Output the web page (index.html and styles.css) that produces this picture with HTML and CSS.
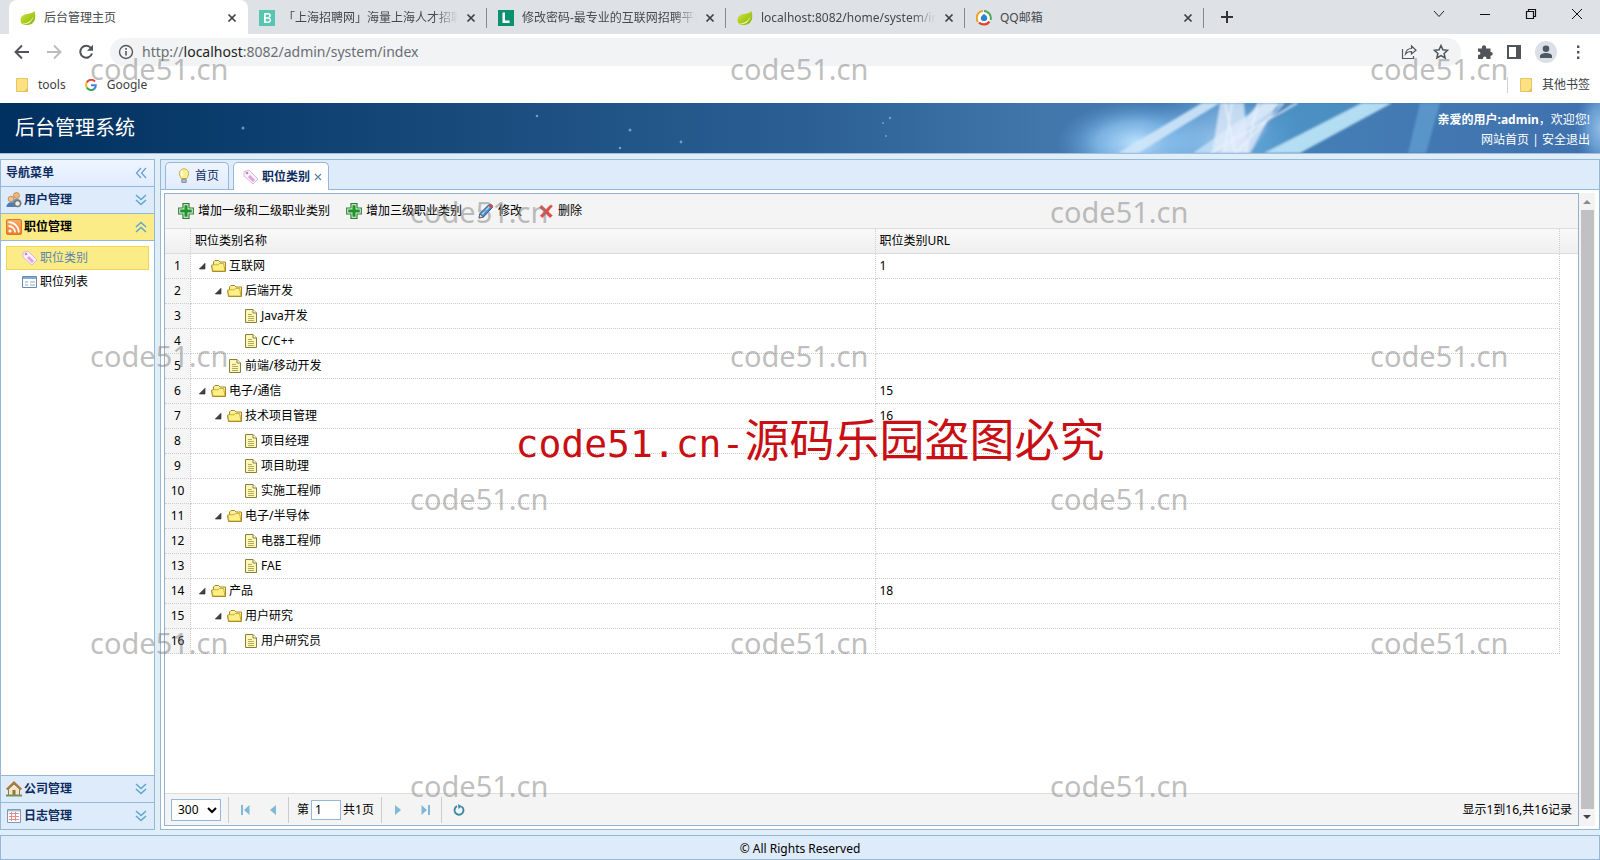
FILE: index.html
```html
<!DOCTYPE html>
<html lang="zh-CN">
<head>
<meta charset="utf-8">
<title>后台管理主页</title>
<link rel="stylesheet" href="styles.css">
</head>
<body>
<svg class="defs" aria-hidden="true">
  <defs>
    <linearGradient id="gFolder" x1="0" y1="0" x2="0" y2="1"><stop offset="0" stop-color="#fff9a8"/><stop offset="1" stop-color="#f3cf45"/></linearGradient>
    <linearGradient id="gLeaf" x1="0" y1="0" x2="1" y2="1"><stop offset="0" stop-color="#dbe43a"/><stop offset="1" stop-color="#7cb50e"/></linearGradient>
    <linearGradient id="gRss" x1="0" y1="0" x2="0" y2="1"><stop offset="0" stop-color="#f9ab6c"/><stop offset="1" stop-color="#ee7a24"/></linearGradient>
    <symbol id="i-leaf" viewBox="0 0 16 16"><path d="M14.6 1c1.6 6 .9 13-6.600 14C5.300 15.300 3 14.800 1.600 13.600.2 11.500-.2 8 2.400 5.800 5.800 3 12 4.500 14.600 1z" fill="url(#gLeaf)"/><path d="M1.500 13.600c5 .2 9.500-2 12.100-7.600-1.600 6.500-6 9.400-12.100 7.600z" fill="#f3f7a0"/></symbol>
    <symbol id="i-x" viewBox="0 0 10 10"><path d="M1.500 1.500l7 7m0-7l-7 7" stroke="currentColor" stroke-width="1.700" fill="none"/></symbol>
    <symbol id="i-file" viewBox="0 0 12 14"><path d="M.5.500h11v13H.500z" fill="#fddf84" stroke="#e9c65c"/><path d="M8.500 13.500l3-4v4z" fill="#e5bf4d"/></symbol>
    <symbol id="i-down" viewBox="0 0 12 12"><path d="M1 1l5 4.500L11 1M1 6l5 4.500L11 6" fill="none" stroke="#5fa6cc" stroke-width="1.500"/></symbol>
    <symbol id="i-tag" viewBox="0 0 16 16"><path d="M1 2.500L6 1l9 9-5 5-9-8z" fill="#fbf0fa" stroke="#d8b9d6"/><path d="M7 6l5 5-2 2-5-5z" fill="#dfa0dc"/><circle cx="4" cy="4" r="1.300" fill="#b98cb5"/></symbol>
    <symbol id="i-folder" viewBox="0 0 16 14"><path d="M1.500 12.500L.500 6.500h2V3l1.500-1.500h3.500L9 3h5.500v9.500z" fill="url(#gFolder)" stroke="#a98722"/><path d="M2 12L.8 5.800H7l1.500-1.300h4L14 12z" fill="#fdf186" stroke="#b8962c" stroke-width=".7"/></symbol>
    <symbol id="i-doc" viewBox="0 0 12 14"><path d="M.5.500h7.500l3.500 3.500v9.500H.500z" fill="#fff8b4" stroke="#85803e"/><path d="M8 .5V4h3.500" fill="#fff" stroke="#85803e"/><path d="M3 5.500h4M3 7.500h6M3 9.500h6M3 11.500h6" stroke="#a8a260" stroke-width=".9"/></symbol>
    <symbol id="i-arrow" viewBox="0 0 8 8"><path d="M7 1.300V7H1.300z" fill="#444" stroke="#222" stroke-width=".6"/></symbol>
    <symbol id="i-plus" viewBox="0 0 16 16"><path d="M5 .700h6V5h4.300v6H11v4.300H5V11H.700V5H5z" fill="#fff" stroke="#2c7d32" stroke-width="1.200"/><path d="M6.700 2.500h2.600v4.200h4.200v2.600H9.300v4.200H6.700V9.300H2.500V6.700h4.200z" fill="#1c9a26" stroke="#0d8318" stroke-width=".5"/></symbol>
  </defs>
</svg>

<header class="browser">
  <div class="tabstrip">
    <div class="tab tab-active"><svg class="ico16"><use href="#i-leaf"/></svg><span class="tab-title">后台管理主页</span><button class="close" aria-label="关闭"><svg class="ico10"><use href="#i-x"/></svg></button></div>
    <div class="tab"><svg class="ico16" viewBox="0 0 16 16"><path d="M0 0h16v16H0z" fill="#55c6b0"/><path d="M5 3h4c4 0 3.500 4 1.200 4.800C13 8.500 13 13 9 13H5zM6.800 7.200H9c1.600 0 1.600-2.600 0-2.600H6.800zm0 4.200h2.400c1.900 0 1.900-2.700 0-2.700H6.800z" fill="#fff" fill-rule="evenodd"/></svg><span class="tab-title fade">「上海招聘网」海量上海人才招聘信息</span><button class="close" aria-label="关闭"><svg class="ico10"><use href="#i-x"/></svg></button></div>
    <div class="tab"><svg class="ico16" viewBox="0 0 16 16"><path d="M0 0h16v16H0z" fill="#0c9170"/><path d="M4.500 2.500h2.500v8h4.500V13h-7z" fill="#fff"/></svg><span class="tab-title fade">修改密码-最专业的互联网招聘平台</span><button class="close" aria-label="关闭"><svg class="ico10"><use href="#i-x"/></svg></button></div>
    <div class="tab"><svg class="ico16"><use href="#i-leaf"/></svg><span class="tab-title fade">localhost:8082/home/system/index</span><button class="close" aria-label="关闭"><svg class="ico10"><use href="#i-x"/></svg></button></div>
    <div class="tab"><svg class="ico16" viewBox="0 0 16 16"><circle cx="8" cy="8" r="7" fill="#fff"/><path d="M7 1a7 7 0 0 0-5 11" fill="none" stroke="#f0a01c" stroke-width="2"/><path d="M8 1a7 7 0 0 1 6.500 9" fill="none" stroke="#4ba84e" stroke-width="2"/><path d="M3 12.500a7 7 0 0 0 10.500-1" fill="none" stroke="#dc4434" stroke-width="2.400"/><path d="M8 4c2.500 1.500 4 3 3 5.500-1 2-5 2-6 0C4.200 7 6 5 8 4z" fill="#2f82cc"/></svg><span class="tab-title">QQ邮箱</span><button class="close" aria-label="关闭"><svg class="ico10"><use href="#i-x"/></svg></button></div>
    <button class="newtab" aria-label="新标签页"><svg class="ico12" viewBox="0 0 12 12"><path d="M6 0v12M0 6h12" stroke="#333" stroke-width="2"/></svg></button>
    <div class="winctl">
      <button aria-label="搜索标签页"><svg class="ico12" viewBox="0 0 12 12"><path d="M1 3l5 5.500L11 3" fill="none" stroke="#222"/></svg></button>
      <button aria-label="最小化"><svg class="ico12" viewBox="0 0 12 12"><path d="M1 6.500h10" stroke="#111"/></svg></button>
      <button aria-label="还原"><svg class="ico12" viewBox="0 0 12 12"><path d="M1.500 3.500h7v7h-7zM3.500 3.500v-2h7v7h-2" fill="none" stroke="#111" stroke-width="1.200"/></svg></button>
      <button aria-label="关闭窗口"><svg class="ico12" viewBox="0 0 12 12"><path d="M1 1l10 10M11 1L1 11" stroke="#111"/></svg></button>
    </div>
  </div>
  <div class="navbar">
    <button aria-label="后退"><svg class="ico16" viewBox="0 0 16 16"><path d="M15 8H2M8 1.500L1.500 8 8 14.500" fill="none" stroke="#505357" stroke-width="1.900"/></svg></button>
    <button aria-label="前进"><svg class="ico16" viewBox="0 0 16 16"><path d="M1 8h13M8 1.500L14.500 8 8 14.500" fill="none" stroke="#b9bbbe" stroke-width="1.900"/></svg></button>
    <button aria-label="刷新"><svg class="ico16" viewBox="0 0 16 16"><path d="M13 4A6 6 0 1 0 14 9.500" fill="none" stroke="#505357" stroke-width="2"/><path d="M15 .8v6H9z" fill="#505357"/></svg></button>
    <div class="omnibox">
      <svg class="ico16" viewBox="0 0 16 16"><circle cx="8" cy="8" r="6.500" fill="none" stroke="#55585c" stroke-width="1.400"/><path d="M8 7v4.500M8 4v1.700" stroke="#55585c" stroke-width="1.600"/></svg>
      <span class="url">http://<b>localhost</b>:8082/admin/system/index</span>
      <svg class="ico16" viewBox="0 0 16 16"><path d="M1.500 5v9.500h11V12M4.500 10c.5-4 3-5.500 6-5.500V2l4.500 4.300L10.500 10V7.500C8 7.500 6 8 4.500 10z" fill="none" stroke="#55585c" stroke-width="1.200"/></svg>
      <svg class="ico16" viewBox="0 0 16 16"><path d="M8 1.500l1.900 4.300 4.700.5-3.500 3.100 1 4.600L8 11.600 3.900 14l1-4.600L1.400 6.300l4.700-.5z" fill="none" stroke="#505357" stroke-width="1.500"/></svg>
    </div>
    <div class="exts">
      <svg class="ico16" viewBox="0 0 16 16"><path d="M1 4.500h4c-1-4.500 5-4.500 4 0h4.500V8c3-.3 3 4 0 3.800V15H9.500c.5-3.500-4-3.500-3.500 0H1v-4c3.200 0 3.200-3.500 0-3.500z" fill="#505357"/></svg>
      <svg class="ico16" viewBox="0 0 16 16"><path d="M2 2h12v12H2z" fill="none" stroke="#505357" stroke-width="2"/><path d="M10 2h4v12h-4z" fill="#505357"/></svg>
      <span class="avatar"><svg class="ico16" viewBox="0 0 16 16"><circle cx="8" cy="4.800" r="3.300" fill="#4b5866"/><path d="M2 14V12c0-4 12-4 12 0v2z" fill="#4b5866"/></svg></span>
      <svg class="ico16" viewBox="0 0 16 16"><path d="M7 1.500h2.400v2.400H7zM7 7h2.400v2.400H7zM7 12.500h2.400v2.400H7z" fill="#505357"/></svg>
    </div>
  </div>
  <nav class="bookmarks">
    <a href="#"><svg class="bm-file"><use href="#i-file"/></svg>tools</a>
    <a href="#"><svg class="bm-g" viewBox="0 0 12 12"><path d="M10 2.500A5 5 0 0 0 1.800 3.500" fill="none" stroke="#e64637" stroke-width="2"/><path d="M1.800 3.500a5 5 0 0 0 0 5" fill="none" stroke="#f5b91a" stroke-width="2"/><path d="M1.800 8.500A5 5 0 0 0 9.500 9.800" fill="none" stroke="#39a452" stroke-width="2"/><path d="M6 6.200h4.800A5 5 0 0 1 9.300 9.800" fill="none" stroke="#4380ee" stroke-width="2"/></svg>Google</a>
    <a href="#" class="bm-other"><svg class="bm-file"><use href="#i-file"/></svg>其他书签</a>
  </nav>
</header>

<div class="banner">
  <svg class="art" viewBox="0 0 1600 50" preserveAspectRatio="xMaxYMid slice" aria-hidden="true">
    <defs>
      <linearGradient id="base"><stop offset="0" stop-color="#00305f"/><stop offset=".15" stop-color="#0b3d6e"/><stop offset=".35" stop-color="#1e5083"/><stop offset=".5" stop-color="#2b5f93"/><stop offset=".65" stop-color="#4176ab"/><stop offset=".8" stop-color="#4580b6"/><stop offset="1" stop-color="#3f70ad"/></linearGradient>
      <radialGradient id="glow"><stop offset="0" stop-color="#bfe4ff"/><stop offset=".5" stop-color="#8cc4f2" stop-opacity=".75"/><stop offset="1" stop-color="#5c9ad6" stop-opacity="0"/></radialGradient>
      <filter id="soft" filterUnits="userSpaceOnUse" x="1060" y="-10" width="540" height="70"><feGaussianBlur stdDeviation="1"/></filter>
    </defs>
    <path d="M0 0h1600v50H0z" fill="url(#base)"/>
    <ellipse cx="1138" cy="40" rx="82" ry="42" fill="url(#glow)"/>
    <ellipse cx="1225" cy="38" rx="85" ry="60" fill="url(#glow)" opacity=".7"/>
    <ellipse cx="1602" cy="25" rx="28" ry="45" fill="url(#glow)" opacity=".7"/>
    <g filter="url(#soft)">
      <path d="M1290 0h85l-75 50h-50z" fill="#4f9bcc" opacity=".6"/>
      <path d="M1420 0h20l-14 50h-18z" fill="#68a9d8" opacity=".6"/>
      <path d="M1202 0h18l-82 50h-20z" fill="#cfe6f8" opacity=".9"/>
      <path d="M1265 0h18l-70 50h-20z" fill="#c7e4fa" opacity=".8"/>
      <path d="M1220 0h24l4 50h-36z" fill="#e2ecfb" opacity=".75"/>
      <path d="M1258 0h20l-28 50h-30z" fill="#e3ebfb" opacity=".75"/>
      <path d="M1297 0l-86 50M1225 0l10 50M1232 0l-8 50M1258 0l-12 50M1284 0l-48 50" stroke="#eef6ff" stroke-width="1.500" opacity=".8"/>
      <path d="M1362 0h30l-92 50h-36z" fill="#b9e2f6" opacity=".95"/>
    </g>
    <g fill="#7fb2de" opacity=".8"><circle cx="243" cy="25" r="1.500"/><circle cx="537" cy="13" r="1.300"/><circle cx="630" cy="27" r="1.500"/><circle cx="620" cy="45" r="1.300"/><circle cx="681" cy="39" r="1.400"/><circle cx="890" cy="15" r="1.200"/><circle cx="883" cy="20" r="1"/><circle cx="886" cy="33" r="1"/></g>
  </svg>
  <h1>后台管理系统</h1>
  <div class="user">
    <div><b>亲爱的用户:admin</b>，欢迎您!</div>
    <div><a href="#">网站首页</a> | <a href="#">安全退出</a></div>
  </div>
</div>

<div class="workspace">
  <aside class="side">
    <div class="side-head">导航菜单<svg class="tool" viewBox="0 0 12 12"><path d="M6 1L1.500 6 6 11M11 1L6.500 6 11 11" fill="none" stroke="#6b9fd0" stroke-width="1.300"/></svg></div>
    <button class="acc"><svg class="ico16" viewBox="0 0 16 16"><circle cx="10.500" cy="3.500" r="3" fill="#edb877" stroke="#b8783b" stroke-width=".7"/><path d="M6 12c0-7 9.500-7 9.500 0z" fill="#6a99cf"/><circle cx="5" cy="7" r="2.800" fill="#f0c18a" stroke="#b8783b" stroke-width=".7"/><path d="M.5 15c0-6.500 9-6.500 9 0z" fill="#4a7cba"/><circle cx="11.500" cy="11.500" r="3" fill="#eee" stroke="#777" stroke-width="1.500"/></svg>用户管理<svg class="tool"><use href="#i-down"/></svg></button>
    <button class="acc acc-open"><svg class="ico16" viewBox="0 0 16 16"><rect x=".5" y=".5" width="15" height="15" rx="1.500" fill="url(#gRss)" stroke="#dc7830"/><circle cx="4" cy="12" r="1.600" fill="#fff"/><path d="M2.500 7a6.500 6.500 0 0 1 6.500 6.500M2.500 3.200A10.300 10.300 0 0 1 12.800 13.500" fill="none" stroke="#fff" stroke-width="1.800"/></svg>职位管理<svg class="tool flip"><use href="#i-down"/></svg></button>
    <div class="side-body">
      <a href="#" class="node node-on"><svg class="ico16"><use href="#i-tag"/></svg>职位类别</a>
      <a href="#" class="node"><svg class="ico16" viewBox="0 0 16 16"><path d="M.5 2.500h14v11H.500z" fill="#fff" stroke="#6889ab"/><path d="M1 3h13v2H1z" fill="#7faedb"/><path d="M3 8h3M3 11h3M8 8h5M8 11h5" stroke="#8ba5bf"/></svg>职位列表</a>
    </div>
    <button class="acc"><svg class="ico16" viewBox="0 0 16 16"><path d="M2.500 8L8 3l5.500 5v6.500h-11z" fill="#f5e7c5" stroke="#8a7a58"/><path d="M.7 8.500L8 1.500l7.300 7" fill="none" stroke="#a97944" stroke-width="2"/><path d="M6.500 9h3v5.500h-3z" fill="#987347"/><path d="M0 14.500h16" stroke="#6e9650" stroke-width="2"/></svg>公司管理<svg class="tool"><use href="#i-down"/></svg></button>
    <button class="acc"><svg class="ico16" viewBox="0 0 16 16"><path d="M1.500 1.500h13v13h-13z" fill="#fff" stroke="#7b9bb8"/><path d="M2 2h12v1.500H2z" fill="#a7c3da"/><path d="M3 5.500h10M3 8.500h10M3 11.500h10M5.500 4v9M9.500 4v9" stroke="#e08d8d"/></svg>日志管理<svg class="tool"><use href="#i-down"/></svg></button>
  </aside>

  <main class="main">
    <div class="ptabs">
      <button class="ptab"><svg class="ico16" viewBox="0 0 16 16"><path d="M5.500 10.500C1.500 6 3.500.8 8 .8s6.500 5.200 2.500 9.700z" fill="#fcef8d" stroke="#c9b355"/><path d="M6.500 3c-2 2-.5 4 0 5" fill="none" stroke="#fff" stroke-width="1.500"/><path d="M5.800 11h4.400v3.500H5.800z" fill="#b4b9bf" stroke="#7e848b" stroke-width=".8"/></svg>首页</button>
      <button class="ptab ptab-on"><svg class="ico16"><use href="#i-tag"/></svg>职位类别<svg class="ptab-x" viewBox="0 0 8 8"><path d="M1 1l6 6m0-6L1 7" stroke="#5d84a8" stroke-width="1.200"/></svg></button>
    </div>
    <div class="stage">
      <section class="grid">
        <div class="toolbar">
          <button><svg class="ico16"><use href="#i-plus"/></svg>增加一级和二级职业类别</button>
          <button><svg class="ico16"><use href="#i-plus"/></svg>增加三级职业类别</button>
          <button><svg class="ico16" viewBox="0 0 16 16"><path d="M1 15l1-4.500L11 1.500c1.500-1.300 4.500 1.300 3.300 3L5.500 14z" fill="#3a8edb" stroke="#1e5596"/><path d="M4 11.500l7.500-8" stroke="#a9d5f7" stroke-width="1.500"/><path d="M1 15l1-4 3.300 3z" fill="#f3d9a6" stroke="#444" stroke-width=".6"/><path d="M11 1.500c1.500-1.300 4.500 1.300 3.300 3l-1 1-3.200-3z" fill="#d94d3e"/></svg>修改</button>
          <button><svg class="ico16" viewBox="0 0 16 16"><path d="M3.500 2C5 3.500 7 5.500 8 6.500c1.500-2 3-3.500 5-4.800l1.700 1.600C13 5 11.500 6.500 10.500 8.500c1.200 1.500 2.500 3 4 4l-2.300 2.300c-1.500-1-2.800-2.500-4-4-1.300 1.500-2.300 2.800-3.600 4L2 12.800C3.500 11.500 4.800 10 5.800 8.500 4.500 7.200 3 6 1.500 4.500z" fill="#e04a46" stroke="#d98a87" stroke-width=".6"/></svg>删除</button>
        </div>
        <div class="gridview">
          <table>
            <colgroup><col class="c-num"><col><col><col class="c-gap"></colgroup>
            <thead><tr><th></th><th>职位类别名称</th><th>职位类别URL</th><th></th></tr></thead>
            <tbody>
              <tr><td>1</td><td><span class="t l1"><svg class="ar"><use href="#i-arrow"/></svg><svg class="fo"><use href="#i-folder"/></svg>互联网</span></td><td>1</td><td></td></tr>
              <tr><td>2</td><td><span class="t l2"><svg class="ar"><use href="#i-arrow"/></svg><svg class="fo"><use href="#i-folder"/></svg>后端开发</span></td><td></td><td></td></tr>
              <tr><td>3</td><td><span class="t l4"><svg class="dc"><use href="#i-doc"/></svg>Java开发</span></td><td></td><td></td></tr>
              <tr><td>4</td><td><span class="t l4"><svg class="dc"><use href="#i-doc"/></svg>C/C++</span></td><td></td><td></td></tr>
              <tr><td>5</td><td><span class="t l3"><svg class="dc"><use href="#i-doc"/></svg>前端/移动开发</span></td><td></td><td></td></tr>
              <tr><td>6</td><td><span class="t l1"><svg class="ar"><use href="#i-arrow"/></svg><svg class="fo"><use href="#i-folder"/></svg>电子/通信</span></td><td>15</td><td></td></tr>
              <tr><td>7</td><td><span class="t l2"><svg class="ar"><use href="#i-arrow"/></svg><svg class="fo"><use href="#i-folder"/></svg>技术项目管理</span></td><td>16</td><td></td></tr>
              <tr><td>8</td><td><span class="t l4"><svg class="dc"><use href="#i-doc"/></svg>项目经理</span></td><td></td><td></td></tr>
              <tr><td>9</td><td><span class="t l4"><svg class="dc"><use href="#i-doc"/></svg>项目助理</span></td><td></td><td></td></tr>
              <tr><td>10</td><td><span class="t l4"><svg class="dc"><use href="#i-doc"/></svg>实施工程师</span></td><td></td><td></td></tr>
              <tr><td>11</td><td><span class="t l2"><svg class="ar"><use href="#i-arrow"/></svg><svg class="fo"><use href="#i-folder"/></svg>电子/半导体</span></td><td></td><td></td></tr>
              <tr><td>12</td><td><span class="t l4"><svg class="dc"><use href="#i-doc"/></svg>电器工程师</span></td><td></td><td></td></tr>
              <tr><td>13</td><td><span class="t l4"><svg class="dc"><use href="#i-doc"/></svg>FAE</span></td><td></td><td></td></tr>
              <tr><td>14</td><td><span class="t l1"><svg class="ar"><use href="#i-arrow"/></svg><svg class="fo"><use href="#i-folder"/></svg>产品</span></td><td>18</td><td></td></tr>
              <tr><td>15</td><td><span class="t l2"><svg class="ar"><use href="#i-arrow"/></svg><svg class="fo"><use href="#i-folder"/></svg>用户研究</span></td><td></td><td></td></tr>
              <tr><td>16</td><td><span class="t l4"><svg class="dc"><use href="#i-doc"/></svg>用户研究员</span></td><td></td><td></td></tr>
            </tbody>
          </table>
        </div>
        <div class="pager">
          <select aria-label="每页记录数"><option>300</option></select>
          <div class="pgroup"><button aria-label="首页"><svg class="ico10" viewBox="0 0 10 10"><path d="M1 0h2v10H1zM9.500 0v10L4 5z" fill="#7fb9d6"/></svg></button><button aria-label="上一页"><svg class="ico10" viewBox="0 0 10 10"><path d="M8 0v10L2 5z" fill="#7fb9d6"/></svg></button></div>
          <div class="pgroup pnum"><label for="page">第</label><input id="page" type="text" value="1"><span>共1页</span></div>
          <div class="pgroup"><button aria-label="下一页"><svg class="ico10" viewBox="0 0 10 10"><path d="M2 0v10l6-5z" fill="#7fb9d6"/></svg></button><button aria-label="末页"><svg class="ico10" viewBox="0 0 10 10"><path d="M7 0h2v10H7zM.5 0v10L6 5z" fill="#7fb9d6"/></svg></button></div>
          <div class="pgroup"><button aria-label="刷新"><svg class="ico12" viewBox="0 0 12 12"><path d="M4 2.200A4.500 4.500 0 1 0 8.500 2.500" fill="none" stroke="#3c8ba6" stroke-width="1.900"/><path d="M5 0l4 2.300L5.500 5z" fill="#3c8ba6"/></svg></button></div>
          <span class="pinfo">显示1到16,共16记录</span>
        </div>
      </section>
      <div class="scroll" aria-hidden="true">
        <svg class="ico8" viewBox="0 0 8 8"><path d="M0 6h8L4 2z" fill="#8b8b8b"/></svg>
        <span class="thumb"></span>
        <svg class="ico8" viewBox="0 0 8 8"><path d="M0 2h8L4 6z" fill="#444"/></svg>
      </div>
    </div>
  </main>
</div>

<footer class="foot">© All Rights Reserved</footer>

<div class="marks" aria-hidden="true">
  <div><span>code51.cn</span><span>code51.cn</span><span>code51.cn</span></div>
  <div class="odd"><span>code51.cn</span><span>code51.cn</span></div>
  <div><span>code51.cn</span><span>code51.cn</span><span>code51.cn</span></div>
  <div class="odd"><span>code51.cn</span><span>code51.cn</span></div>
  <div><span>code51.cn</span><span>code51.cn</span><span>code51.cn</span></div>
  <div class="odd"><span>code51.cn</span><span>code51.cn</span></div>
</div>
<div class="notice" aria-hidden="true"><span>code51.cn-</span>源码乐园盗图必究</div>
</body>
</html>
```

FILE: styles.css
```css
* { box-sizing: border-box; }
body {
  margin: 0;
  position: relative;
  min-height: 100vh;
  display: flex;
  flex-direction: column;
  background: #e0eef8;
  color: #000;
  font: 12px/16px "Noto Sans", "Noto Sans CJK SC", sans-serif;
}
button {
  border: 0;
  padding: 0;
  background: none;
  font: inherit;
  color: inherit;
  display: flex;
  align-items: center;
}
a { color: inherit; text-decoration: none; }
svg { flex: none; display: block; }
.defs { position: absolute; width: 0; height: 0; }
.ico8 { width: 8px; height: 8px; }
.ico10 { width: 10px; height: 10px; }
.ico12 { width: 12px; height: 12px; }
.ico16 { width: 16px; height: 16px; }

/* browser chrome */
.browser { background: #fff; }
.tabstrip {
  display: flex;
  height: 34px;
  padding-left: 9px;
  background: #dee1e6;
  color: #45494d;
}
.tab {
  display: flex;
  align-items: center;
  gap: 8px;
  flex: 0 1 239px;
  min-width: 0;
  padding: 1px 11px 0;
  position: relative;
}
.tab::after {
  content: "";
  position: absolute;
  right: 0;
  top: 8px;
  width: 1px;
  height: 20px;
  background: #85898e;
}
.tab-active { background: #fff; border-radius: 8px 8px 0 0; }
.tab-active::after { display: none; }
.tab-title { flex: 1; min-width: 0; overflow: hidden; white-space: nowrap; }
.fade { mask-image: linear-gradient(90deg, #000 86%, transparent); }
.close { color: #3c4043; }
.newtab { padding: 0 17px; }
.winctl { display: flex; gap: 34px; margin-left: auto; padding: 0 17px 6px 0; }
.navbar {
  display: flex;
  align-items: center;
  height: 34px;
  padding: 4px 14px 2px 14px;
  gap: 16px;
}
.navbar > button { width: 16px; }
.omnibox {
  flex: 1;
  display: flex;
  align-items: center;
  gap: 16px;
  height: 28px;
  padding: 0 12px 0 8px;
  border-radius: 14px;
  background: #f1f3f4;
}
.url { flex: 1; margin-left: -8px; font-size: 14px; color: #6a6e73; }
.url b { font-weight: 400; color: #222; }
.exts { display: flex; align-items: center; gap: 13px; }
.avatar {
  display: flex;
  align-items: center;
  justify-content: center;
  width: 22px;
  height: 22px;
  border-radius: 50%;
  background: #dbe0e6;
}
.bookmarks {
  display: flex;
  align-items: center;
  gap: 19px;
  height: 35px;
  padding: 0 10px 2px 16px;
  color: #3c4043;
}
.bookmarks a { display: flex; align-items: center; gap: 10px; }
.bm-file { width: 12px; height: 14px; }
.bm-g { width: 12px; height: 12px; }
.bm-other { margin-left: auto; padding-left: 12px; border-left: 1px solid #cfd1d4; }

/* banner */
.banner {
  position: relative;
  display: flex;
  align-items: center;
  justify-content: space-between;
  height: 50px;
  padding: 0 10px 0 15px;
  background: #00305f;
  color: #fff;
}
.art { position: absolute; inset: 0; width: 100%; height: 100%; }
.banner h1 { position: relative; margin: 0; font-size: 20px; line-height: 28px; font-weight: 400; }
.user { position: relative; padding-top: 4px; text-align: right; line-height: 20px; }

/* workspace */
.workspace {
  flex: 1;
  display: flex;
  gap: 5px;
  padding: 5px 0;
  border-top: 1px solid #a5bde0;
}
.side {
  flex: none;
  width: 155px;
  display: flex;
  flex-direction: column;
  border: 1px solid #95b8d8;
  background: #fff;
  font-weight: 700;
  color: #0e2d5f;
}
.side-head, .acc {
  display: flex;
  align-items: center;
  gap: 2px;
  height: 27px;
  padding: 0 7px 0 5px;
  border-bottom: 1px solid #95b8d8;
}
.side-head { background: linear-gradient(#eff5ff, #e0ecff); }
.acc { background: #deebfb; font-weight: 700; }
.side-body + .acc { border-top: 1px solid #95b8d8; height: 28px; }
.acc:last-child { height: 26px; border-bottom: 0; }
.acc-open { background: #fbec88; color: #000; }
.tool { width: 12px; height: 12px; margin-left: auto; }
.flip { transform: rotate(180deg); }
.side-body { flex: 1; padding: 5px; font-weight: 400; color: #000; }
.node {
  display: flex;
  align-items: center;
  gap: 2px;
  height: 24px;
  padding-left: 15px;
  border: 1px solid transparent;
}
.node-on { background: #fbec88; border-color: #ecd557; color: #5c86ac; }

.main {
  flex: 1;
  min-width: 0;
  display: flex;
  flex-direction: column;
  border: 1px solid #95b8d8;
  background: #fff;
}
.ptabs {
  display: flex;
  gap: 4px;
  height: 30px;
  padding: 2px 4px 0;
  background: #deebfb;
  border-bottom: 1px solid #95b8d8;
}
.ptab {
  gap: 3px;
  height: 27px;
  padding: 0 9px 0 10px;
  border: 1px solid #95b8d8;
  border-bottom: 0;
  border-radius: 5px 5px 0 0;
  background: linear-gradient(#eff5ff, #e0ecff);
  color: #0e2d5f;
}
.ptab-on { height: 28px; padding: 0 6px 0 9px; background: #fff; font-weight: 700; }
.ptab-x { width: 8px; height: 8px; margin-left: 1px; }
.stage { flex: 1; display: flex; padding: 3px 4px 3px 3px; }
.grid {
  flex: 1;
  min-width: 0;
  display: flex;
  flex-direction: column;
  border: 1px solid #95b0cc;
}
.toolbar {
  display: flex;
  gap: 16px;
  height: 35px;
  padding: 0 13px;
  background: #f4f4f4;
  border-bottom: 1px solid #ddd;
}
.toolbar button { gap: 4px; }
.gridview { flex: 1; }
table { width: 100%; table-layout: fixed; border-collapse: separate; border-spacing: 0; }
.c-num { width: 26px; }
.c-gap { width: 18px; }
th, td { height: 25px; padding: 0 4px; text-align: left; font-weight: 400; }
th { border-bottom: 1px solid #ddd; background: linear-gradient(#f9f9f9, #efefef); }
th, td { border-right: 1px dotted #ccc; }
td { border-bottom: 1px dotted #ccc; }
td:first-child { padding: 0; text-align: center; background: #f5f5f5; }
th:last-child { border-right: 0; }
td:last-child { border: 0; }
.t { display: flex; align-items: center; gap: 2px; }
.l1 { padding-left: 3px; }
.l2 { padding-left: 19px; }
.l3 { padding-left: 34px; }
.l4 { padding-left: 50px; }
.ar { width: 8px; height: 8px; margin-right: 3px; }
.fo { width: 16px; height: 14px; }
.dc { width: 12px; height: 14px; margin-right: 2px; }
.pager {
  display: flex;
  align-items: center;
  height: 32px;
  padding: 0 6px;
  background: #f4f4f4;
  border-top: 1px solid #ddd;
}
.pager select {
  width: 50px;
  height: 22px;
  margin-right: 7px;
  padding: 0 2px;
  border: 1px solid #95b8d8;
  background: #fff;
  color: #000;
  font: inherit;
}
.pgroup {
  display: flex;
  align-items: center;
  gap: 18px;
  height: 26px;
  padding: 0 10px 0 11px;
  border-left: 1px solid #ccc;
}
.pnum { gap: 2px; padding: 0 7px 0 8px; }
.pnum input {
  width: 30px;
  height: 20px;
  padding: 0 3px;
  border: 1px solid #95b8d8;
  background: #fff;
  font: inherit;
}
.pinfo { margin-left: auto; }
.scroll {
  flex: none;
  width: 16px;
  display: flex;
  flex-direction: column;
  align-items: center;
  gap: 4px;
  padding: 5px 0;
  background: #f3f3f3;
}
.thumb { flex: 1; width: 13px; background: #c1c1c4; }
.foot {
  height: 25px;
  border: 1px solid #95b8d8;
  background: #deebfb;
  text-align: center;
  line-height: 25px;
}

/* overlay marks */
.marks {
  position: absolute;
  inset: 0;
  display: flex;
  flex-direction: column;
  justify-content: space-between;
  padding: 49px 0 54px;
  pointer-events: none;
  font-size: 29px;
  line-height: 40px;
  color: rgba(128, 128, 128, .5);
}
.marks div { display: grid; grid-template-columns: 2fr 2fr 1fr; }
.marks .odd { grid-template-columns: 2fr 3fr; }
.marks span { padding-left: 90px; }
.marks .odd span { padding-left: 410px; }
.notice {
  position: absolute;
  left: 0;
  right: 0;
  top: 408px;
  padding-left: 20px;
  text-align: center;
  pointer-events: none;
  font: 400 45px/60px "Noto Sans CJK SC", sans-serif;
  color: #c80f14;
}
.notice span { font: 400 38px/60px "DejaVu Sans Mono", monospace; }
```
